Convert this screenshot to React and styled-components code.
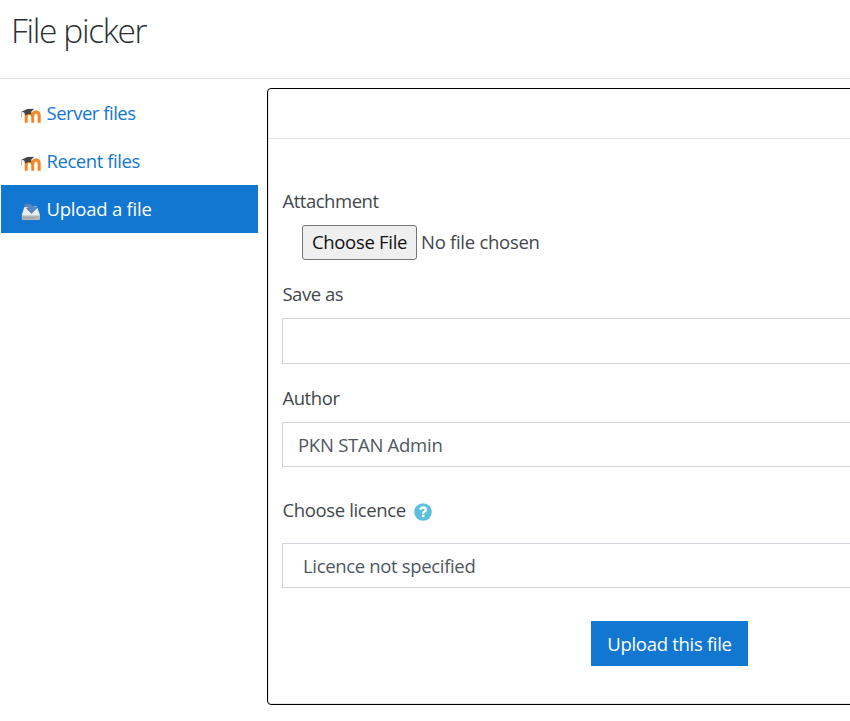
import React from "react";
import styled, { createGlobalStyle } from "styled-components";

const GlobalStyle = createGlobalStyle`
  *, *::before, *::after { box-sizing: border-box; }
  html, body { margin: 0; height: 100%; overflow: hidden; background: #fff; }
  body {
    font-family: "Open Sans", "Noto Sans", sans-serif;
    font-size: 18.5px;
    font-weight: 400;
    color: #43474b;
    font-kerning: normal;
  }
`;

const Dialog = styled.main`
  display: flex;
  flex-direction: column;
  width: 100vw;
  height: 721px;
  overflow: hidden;
`;

const Header = styled.header`
  height: 79px;
  flex: none;
  padding: 8px 0 0 11px;
  border-bottom: 1px solid #dee2e6;
`;

const Title = styled.h1`
  margin: 0;
  font-size: 33.5px;
  line-height: 44px;
  font-weight: 300;
  letter-spacing: -1.35px;
  color: #2c2f32;
`;

const Body = styled.div`
  display: flex;
  flex: 1;
  padding-top: 9px;
`;

const Sidebar = styled.nav`
  width: 257px;
  flex: none;
  margin: 1px 9px 0 1px;
`;

const RepoLink = styled.a`
  display: flex;
  align-items: center;
  height: 48px;
  padding-left: 20px;
  gap: 5.5px;
  color: ${(p) => (p.$active ? "#fff" : "#1177d1")};
  background: ${(p) => (p.$active ? "#1177d1" : "transparent")};
  text-decoration: none;
  svg { flex: none; margin-top: 5px; }
`;

const Label = styled.span`
  line-height: 28px;
  letter-spacing: ${(p) => p.$track || 0}px;
  white-space: nowrap;
`;

const Panel = styled.section`
  flex: none;
  width: 640px;
  height: 617px;
  border: 1px solid #000;
  border-radius: 4px;
  box-shadow: inset 1px -1px 0 #e8e8e8;
`;

const Toolbar = styled.div`
  height: 50px;
  border-bottom: 1px solid #dee2e6;
`;

const Form = styled.form`
  display: flex;
  flex-direction: column;
  padding: 48px 0 0 14px;
`;

const FieldLabel = styled.label`
  display: flex;
  align-items: center;
  gap: 8px;
  height: 28px;
  padding-left: 0.4px;
  margin-top: ${(p) => p.$top || 0}px;
  svg { margin-top: 3px; }
`;

const FilePicker = styled.div`
  display: flex;
  align-items: center;
  gap: 4px;
  height: 35px;
  margin: 10px 0 0 20px;
`;

const ChooseButton = styled.button`
  width: 115px;
  height: 35px;
  padding: 0 0 1px;
  border: 1px solid #767676;
  border-radius: 3px;
  background: #efefef;
  color: #111;
  font: inherit;
`;

const FileStatus = styled(Label)`
  padding-bottom: 1px;
`;

const Field = styled.div`
  display: flex;
  align-items: center;
  height: ${(p) => p.$height}px;
  margin-top: ${(p) => p.$top}px;
  padding-left: ${(p) => p.$inset || 15}px;
  border: 1px solid #ced4da;
  color: #50575e;
`;

const SubmitButton = styled.button`
  width: 157px;
  height: 45px;
  margin: 33px 0 0 309px;
  padding: 0;
  border: 0;
  background: #1177d1;
  color: #fff;
  font: inherit;
`;

const MoodleIcon = () => (
  <svg width="20" height="16" viewBox="0 0 20 16">
    <path d="M5.2 15.3V8.7Q5.3 6 8 6Q11.2 6 11.7 8.7V15.3M11.7 8.7Q11.8 4.6 15 4.6Q18.2 4.6 18.2 8V15.3" transform="translate(0 -.5)" fill="none" stroke="#f78423" strokeWidth="3" />
    <path d="M.3 3.8L6.5 1.1L13.2 .8L10 4L10.3 6.2Q7 5.5 4 7.4L3.3 4.6Z" fill="#484442" />
    <path d="M.8 4.1Q.2 6 .3 10" fill="none" stroke="#98765e" strokeWidth=".6" />
  </svg>
);

const UploadIcon = () => (
  <svg width="20" height="19" viewBox="0 0 20 19">
    <path d="M3.5 4.5H16L18.8 12.5V16.5Q18.8 17.7 17.8 17.7H2Q.9 17.7 .9 16.5V12.5Z" fill="#e9edef" />
    <path d="M1 13.4H18.7V16.5Q18.7 17.7 17.7 17.7H2Q1 17.7 1 16.5Z" fill="#b3b5b4" />
    <path d="M2 16.1H14" stroke="#999b9a" strokeWidth=".8" />
    <path d="M3 2.5Q10-.8 12.4 5.3H16.5L10.6 11.4L5.6 6.5H8.1Q7 3.9 3.5 4.6Z" fill="#5688c7" stroke="#3b6fae" strokeWidth=".6" />
  </svg>
);

const HelpIcon = () => (
  <svg width="18" height="18" viewBox="0 0 18 18">
    <circle cx="9" cy="9" r="8.8" fill="#5bc0de" />
    <path d="M6.1 6.7Q6.9 4.5 9.1 4.5Q11.9 4.6 11.9 6.8Q11.9 8.1 10.2 8.8Q9.1 9.3 9.1 10.7" fill="none" stroke="#fff" strokeWidth="2.4" />
    <rect x="7.9" y="11.8" width="2.5" height="2.5" fill="#fff" />
  </svg>
);

export default function App() {
  return (
    <>
      <GlobalStyle />
      <Dialog>
        <Header><Title>File picker</Title></Header>
        <Body>
          <Sidebar>
            <RepoLink><MoodleIcon /><Label $track={-0.48}>Server files</Label></RepoLink>
            <RepoLink><MoodleIcon /><Label $track={-0.44}>Recent files</Label></RepoLink>
            <RepoLink $active><UploadIcon /><Label $track={-0.22}>Upload a file</Label></RepoLink>
          </Sidebar>
          <Panel>
            <Toolbar />
            <Form>
              <FieldLabel><Label $track={-0.46}>Attachment</Label></FieldLabel>
              <FilePicker>
                <ChooseButton type="button"><Label $track={-0.3}>Choose File</Label></ChooseButton>
                <FileStatus $track={-0.28}>No file chosen</FileStatus>
              </FilePicker>
              <FieldLabel $top={20}><Label $track={-0.46}>Save as</Label></FieldLabel>
              <Field $top={10} $height={46} />
              <FieldLabel $top={20}><Label $track={-0.42}>Author</Label></FieldLabel>
              <Field $top={10} $height={45}><Label $track={-0.26}>PKN STAN Admin</Label></Field>
              <FieldLabel $top={29}><Label $track={-0.36}>Choose licence</Label><HelpIcon /></FieldLabel>
              <Field $top={19} $height={45} $inset={20}><Label $track={-0.34}>Licence not specified</Label></Field>
              <SubmitButton type="button"><Label $track={-0.3}>Upload this file</Label></SubmitButton>
            </Form>
          </Panel>
        </Body>
      </Dialog>
    </>
  );
}
